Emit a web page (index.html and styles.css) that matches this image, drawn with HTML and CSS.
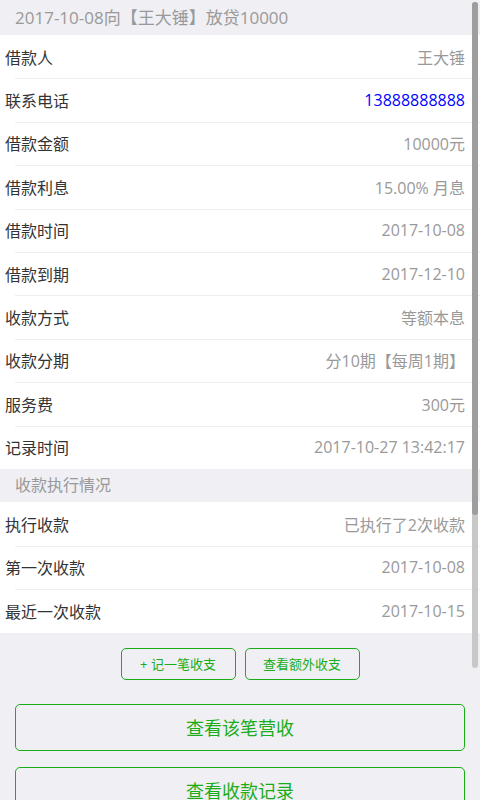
FILE: index.html
```html
<!DOCTYPE html>
<html lang="zh-CN">
  <head>
    <meta charset="utf8" />
    <meta name="viewport" content="width=device-width, initial-scale=1" />
    <title>借款详情</title>
    <link rel="stylesheet" href="styles.css">
  </head>
  <body>
    <div class="page">
      <div class="group-title first">2017-10-08向【王大锤】放贷10000</div>
      <div class="cells">
        <div class="cell"><span class="label">借款人</span><span class="value">王大锤</span></div>
        <div class="cell"><span class="label">联系电话</span><a class="value phone" href="#">13888888888</a></div>
        <div class="cell"><span class="label">借款金额</span><span class="value">10000元</span></div>
        <div class="cell"><span class="label">借款利息</span><span class="value">15.00% 月息</span></div>
        <div class="cell"><span class="label">借款时间</span><span class="value">2017-10-08</span></div>
        <div class="cell"><span class="label">借款到期</span><span class="value">2017-12-10</span></div>
        <div class="cell"><span class="label">收款方式</span><span class="value">等额本息</span></div>
        <div class="cell"><span class="label">收款分期</span><span class="value">分10期【每周1期】</span></div>
        <div class="cell"><span class="label">服务费</span><span class="value">300元</span></div>
        <div class="cell"><span class="label">记录时间</span><span class="value">2017-10-27 13:42:17</span></div>
      </div>
      <div class="group-title">收款执行情况</div>
      <div class="cells">
        <div class="cell"><span class="label">执行收款</span><span class="value">已执行了2次收款</span></div>
        <div class="cell"><span class="label">第一次收款</span><span class="value">2017-10-08</span></div>
        <div class="cell"><span class="label">最近一次收款</span><span class="value">2017-10-15</span></div>
      </div>
      <div class="mini-actions">
        <button class="btn-mini">+ 记一笔收支</button>
        <button class="btn-mini">查看额外收支</button>
      </div>
      <div class="actions">
        <button class="btn-plain">查看该笔营收</button>
        <button class="btn-plain">查看收款记录</button>
      </div>
    </div>
    <div class="scrollbar">
      <div class="scroll-track"></div>
      <div class="scroll-thumb"></div>
    </div>
  </body>
</html>
```

FILE: styles.css
```css
/* Reset */
body, html {
  margin: 0;
  padding: 0;
  height: 800px;
  overflow: hidden;
  background: #efeff4;
  font-family: "Open Sans", "Noto Sans CJK SC", sans-serif;
}
* {
  box-sizing: border-box;
}
.page {
  width: 480px;
}
.group-title {
  height: 33.5px;
  line-height: 33.5px;
  padding-left: 15px;
  font-size: 16px;
  color: #999;
}
.group-title.first {
  height: 35px;
  line-height: 35px;
  font-size: 17px;
}
.cells {
  background: #fff;
}
.cell {
  display: flex;
  justify-content: space-between;
  align-items: center;
  height: 43.4px;
  padding: 0 15px 0 5px;
  font-size: 16px;
  position: relative;
}
.cell + .cell::before {
  content: "";
  position: absolute;
  top: 0;
  left: 15px;
  right: 0;
  border-top: 1px solid #eeeeee;
}
.label {
  color: #333;
}
.value {
  color: #999;
}
.phone {
  color: #0000ff;
  text-decoration: none;
}
.mini-actions {
  display: flex;
  justify-content: center;
  gap: 9px;
  padding-top: 15px;
}
.btn-mini {
  width: 115px;
  height: 32px;
  border: 1px solid #1aad19;
  border-radius: 5px;
  background: transparent;
  color: #1aad19;
  font-family: inherit;
  font-size: 13px;
  padding: 0;
}
.actions {
  display: flex;
  flex-direction: column;
  gap: 16px;
  padding: 24px 15px 0;
}
.btn-plain {
  height: 47px;
  border: 1px solid #1aad19;
  border-radius: 5px;
  background: transparent;
  color: #1aad19;
  font-family: inherit;
  font-size: 18px;
  padding: 0;
}
.scrollbar {
  position: fixed;
  top: 2px;
  right: 2px;
  width: 6px;
  height: 666px;
}
.scroll-track {
  position: absolute;
  inset: 0;
  background: #c8c8c8;
  border-radius: 3px;
}
.scroll-thumb {
  position: absolute;
  top: 0;
  left: 0;
  right: 0;
  height: 513px;
  background: #9e9e9e;
  border-radius: 3px;
}
```
